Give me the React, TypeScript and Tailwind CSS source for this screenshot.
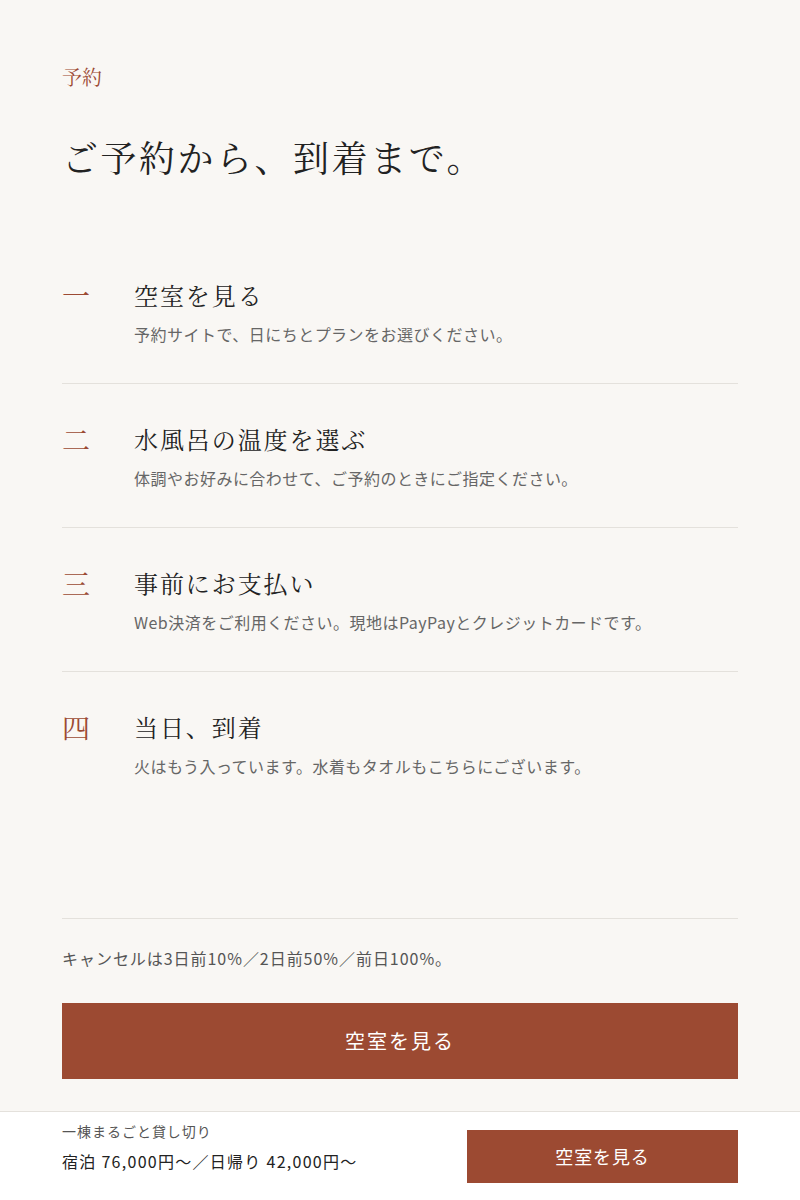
import React from "react";

const serif = { fontFamily: '"Noto Serif CJK JP", "Noto Serif JP", "IPAMincho", "Liberation Serif", "Noto Sans CJK JP", serif' };

const steps = [
  { n: "一", t: "空室を見る", d: "予約サイトで、日にちとプランをお選びください。" },
  { n: "二", t: "水風呂の温度を選ぶ", d: "体調やお好みに合わせて、ご予約のときにご指定ください。" },
  { n: "三", t: "事前にお支払い", d: "Web決済をご利用ください。現地はPayPayとクレジットカードです。" },
  { n: "四", t: "当日、到着", d: "火はもう入っています。水着もタオルもこちらにございます。" },
];

export default function App() {
  return (
    <div
      className="min-h-[1200px] bg-[#f9f7f4] text-[#222]"
      style={{ fontFamily: '"Noto Sans CJK JP", "Noto Sans", sans-serif' }}
    >
      <main className="px-[62px] pt-[62px] pb-[121px]">
        <p className="text-[20px] leading-[30px] text-[#9c4a33]" style={serif}>
          予約
        </p>
        <h1 className="mt-[38px] text-[36px] leading-[54px] tracking-[0.07em] text-[#222]" style={serif}>
          ご予約から、到着まで。
        </h1>
        <ol className="mt-[56px]">
          {steps.map((s, i) => (
            <li
              key={s.n}
              className={
                i < steps.length - 1
                  ? "flex border-b border-[#e4e1dc] pt-[37px] pb-[35px]"
                  : "flex pt-[37px] pb-[35px]"
              }
            >
              <span className="w-[72px] shrink-0 text-[28px] leading-[36px] text-[#9c4a33]" style={serif}>
                {s.n}
              </span>
              <div>
                <h2 className="text-[24px] leading-[36px] tracking-[0.08em] text-[#222]" style={serif}>
                  {s.t}
                </h2>
                <p className="mt-2 text-[16px] leading-[27px] tracking-[0.03em] text-[#666]">{s.d}</p>
              </div>
            </li>
          ))}
        </ol>
        <div className="mt-[103px] border-t border-[#e4e1dc] pt-[26px]">
          <p className="text-[16px] leading-[27px] tracking-[0.06em] text-[#555]">
            キャンセルは3日前10%／2日前50%／前日100%。
          </p>
          <button className="mt-[31px] flex h-[76px] w-full items-center justify-center bg-[#9c4a32] text-[20px] tracking-[0.1em] text-white">
            空室を見る
          </button>
        </div>
      </main>
      <div className="fixed bottom-0 left-0 right-0 flex h-[89px] items-center justify-between border-t border-[#e4e1dc] bg-white px-[62px]">
        <div className="mb-[19px]">
          <p className="text-[14px] leading-[21px] tracking-[0.07em] text-[#555]">一棟まるごと貸し切り</p>
          <p className="mt-[7px] text-[16px] leading-[24px] tracking-[0.08em] text-[#222]">宿泊 76,000円〜／日帰り 42,000円〜</p>
        </div>
        <button className="flex h-[53px] w-[271px] items-center justify-center bg-[#9c4a32] text-[18px] tracking-[0.05em] text-white">
          空室を見る
        </button>
      </div>
    </div>
  );
}
